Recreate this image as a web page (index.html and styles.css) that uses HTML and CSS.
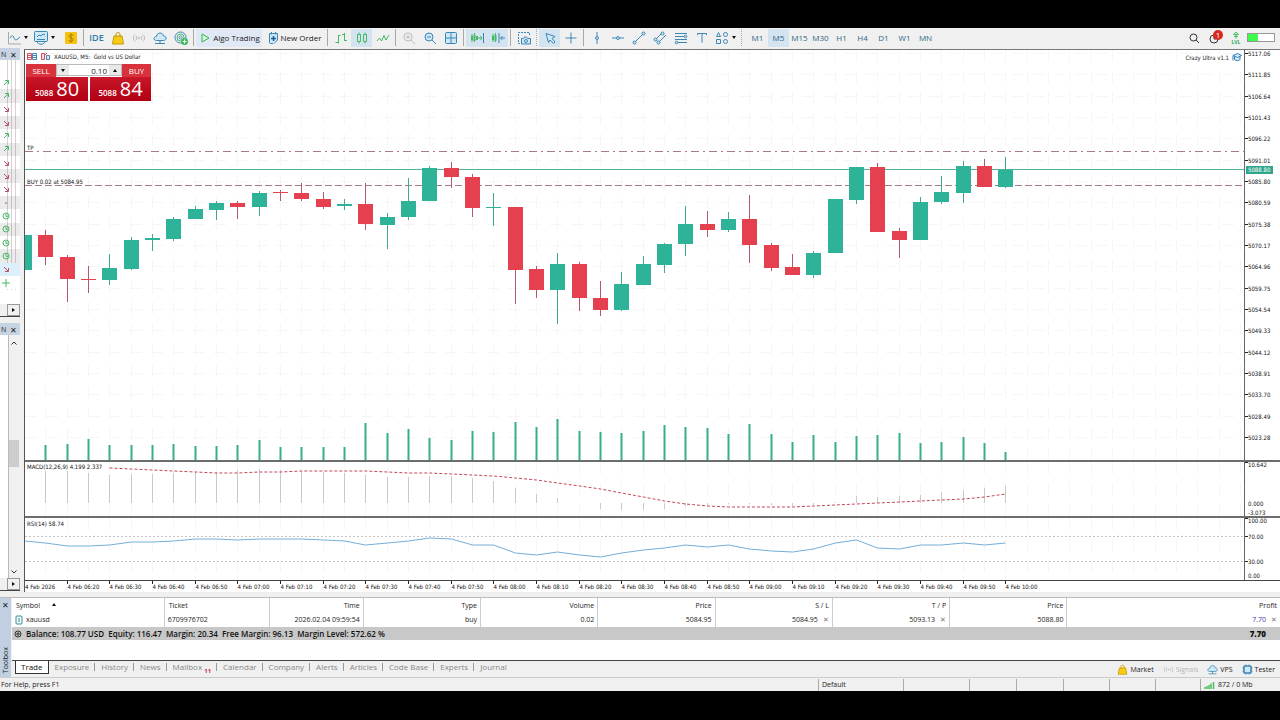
FILE: index.html
```html
<!DOCTYPE html>
<html lang="en">
<head>
  <meta charset="UTF-8">
  <meta name="viewport" content="width=device-width, initial-scale=1.0">
  <title>XAUUSD, M5</title>
  <link rel="stylesheet" href="styles.css">
</head>
<body>
  <div class="terminal">
    <header class="toolbar">
      <button class="tool menu" aria-label="Chart"><svg class="icon" viewBox="0 0 14 14"><path class="gray" d="M1.500 1v12H14"/><path class="blue" d="M3 7c2-3 3-3 4 0s3 2 6-1"/></svg><i class="caret"></i></button>
      <button class="tool menu" aria-label="Indicators"><svg class="icon" viewBox="0 0 14 14"><rect class="blue soft" x=".500" y=".500" width="13" height="10" rx="1"/><path class="blue" d="M3 6l2-2 2 1 2-2 2 1M3 8.500h8M3 11c2 3 6 3 8 0"/></svg><i class="caret"></i></button>
      <button class="tool last" aria-label="Funds"><svg class="icon" viewBox="0 0 14 14"><rect x="1" y="1" width="12" height="12" rx="1" fill="#f5c211"/><path d="M9.500 4.500C8 3 4.500 3.500 5 5.500s4 1 4.200 3S6 11 4.500 9.500M7 2.500v9" fill="none" stroke="#a87c00"/></svg></button>
      <i class="sep"></i>
      <button class="tool ide">IDE</button>
      <button class="tool" aria-label="Market"><svg class="icon" viewBox="0 0 14 14"><path d="M3 5h8l1.500 8h-11z" fill="#f8cb15" stroke="#c99a00"/><path d="M5 6V3.500a2 2 0 0 1 4 0V6" fill="none" stroke="#c99a00"/></svg></button>
      <button class="tool" aria-label="Signals"><svg class="icon" viewBox="0 0 14 14"><path class="pale" d="M3 3.500C1 5.500 1 8.500 3 10.500M11 3.500c2 2 2 5 0 7M5 5C4 6.500 4 7.500 5 9M9 5c1 1.500 1 2.500 0 4"/><circle cx="7" cy="7" r="1" fill="#bbb"/></svg></button>
      <button class="tool" aria-label="VPS"><svg class="icon" viewBox="0 0 14 14"><path class="blue soft" d="M3.500 9.500C0 9.500.500 5.500 3.500 5.500 4 1 10 1 10.500 5c3.500 0 3.500 4.500 0 4.500z"/><path class="blue" d="M7 9.500V12M2 12.500h10"/></svg></button>
      <button class="tool" aria-label="Community"><svg class="icon" viewBox="0 0 14 14"><circle class="blue" cx="6.500" cy="6.500" r="5.500"/><circle class="green" cx="6.500" cy="6.500" r="3.500"/><circle class="blue" cx="6.500" cy="6.500" r="1.500"/><circle cx="10.500" cy="10.500" r="3.500" fill="#3cb95c"/><path d="M8.500 10.500h4M10.500 8.500v4" stroke="#fff"/></svg></button>
      <i class="sep"></i>
      <button class="tool algo active"><svg class="icon" viewBox="0 0 14 14"><path d="M4 3l7 4-7 4z" fill="#d9f5df" stroke="#34b555"/></svg>Algo Trading</button>
      <button class="tool order"><svg class="icon" viewBox="0 0 14 14"><path class="blue soft" d="M7 12.500H4.500a1 1 0 0 1-1-1v-9h8v6.500L8 12.500"/><path class="blue" d="M5.500 1v2.500M9.500 1v2.500"/><path d="M5 7.500h5M7.500 5v5" stroke="#1b5e8c" stroke-width="1.500"/></svg>New Order</button>
      <i class="sep"></i>
      <button class="tool" aria-label="Bars"><svg class="icon" viewBox="0 0 14 14"><path class="green" d="M4.500 4v8.500M1.500 11.500h3M4.500 4.500h2M10.500 2v8M8 3.500h2.500M10.500 9.500H13"/></svg></button>
      <button class="tool active" aria-label="Candles"><svg class="icon" viewBox="0 0 14 14"><path class="green" d="M2.500 3.500h3v7h-3zM8.500 3.500h3v7h-3zM4 1.500v2M4 10.500v2M10 1.500v2M10 10.500v2"/></svg></button>
      <button class="tool" aria-label="Line"><svg class="icon" viewBox="0 0 14 14"><path class="green" d="M1 10l2.500-3 2 3L8 4.500l2 4.500 3-5"/></svg></button>
      <i class="sep"></i>
      <button class="tool" aria-label="Zoom in"><svg class="icon" viewBox="0 0 14 14"><circle class="pale" cx="6" cy="6" r="4"/><path class="pale" d="M9 9l4 4M4 6h4M6 4v4"/></svg></button>
      <button class="tool" aria-label="Zoom out"><svg class="icon" viewBox="0 0 14 14"><circle class="blue soft" cx="6" cy="6" r="4"/><path class="blue" d="M9 9l4 4M4 6h4"/></svg></button>
      <button class="tool" aria-label="Tile"><svg class="icon" viewBox="0 0 14 14"><rect class="blue soft" x="1.500" y="1.500" width="11" height="11" rx="1"/><path class="blue" d="M7 1.500v11M1.500 7h11"/></svg></button>
      <i class="sep"></i>
      <button class="tool active" aria-label="Auto scroll"><svg class="icon" viewBox="0 0 14 14"><path class="green bold" d="M2 5v4M4.500 4v6M7 5v4"/><path class="green" d="M2 3v8M4.500 2v9M8 7h4M10.500 5L12 7l-1.500 2"/><path class="blue" d="M13.500 2v10"/></svg></button>
      <button class="tool active" aria-label="Chart shift"><svg class="icon" viewBox="0 0 14 14"><path class="green bold" d="M2 5v4M4.500 4v6"/><path class="green" d="M2 3v8M4.500 2v9"/><path class="blue" d="M8 2v10M9.500 7H14M11.500 5l-2 2 2 2"/></svg></button>
      <i class="sep"></i>
      <button class="tool" aria-label="Screenshot"><svg class="icon" viewBox="0 0 14 14"><path class="blue" stroke-dasharray="2 1" d="M3 12.500H1.500v-11h11V5"/><path class="blue soft" d="M4.500 7.500h2l1-1.500h2l1 1.500h3v5.500h-9z"/><circle class="blue" cx="9" cy="10" r="1.500"/></svg></button>
      <i class="sep dots"></i>
      <button class="tool active" aria-label="Cursor"><svg class="icon" viewBox="0 0 14 14"><path class="blue soft" d="M3 2.500l9 3-3 2 3 3.500-1.500 1.500L7 9l-1.500 2.500z"/></svg></button>
      <button class="tool" aria-label="Crosshair"><svg class="icon" viewBox="0 0 14 14"><path class="blue" d="M7 1.500v11M1.500 7h11"/></svg></button>
      <i class="sep"></i>
      <button class="tool" aria-label="Vertical line"><svg class="icon" viewBox="0 0 14 14"><path class="blue" d="M7 1v4.500M7 8.500V13"/><circle class="blue soft" cx="7" cy="7" r="1.500"/></svg></button>
      <button class="tool" aria-label="Horizontal line"><svg class="icon" viewBox="0 0 14 14"><path class="blue" d="M1 7h4.500M8.500 7H13"/><circle class="blue soft" cx="7" cy="7" r="1.500"/></svg></button>
      <button class="tool" aria-label="Trend line"><svg class="icon" viewBox="0 0 14 14"><path class="blue" d="M3 11l8-8"/><circle class="blue soft" cx="2.500" cy="11.500" r="1.500"/><circle class="blue soft" cx="11.500" cy="2.500" r="1.500"/></svg></button>
      <button class="tool" aria-label="Channel"><svg class="icon" viewBox="0 0 14 14"><path class="blue" d="M3 8l6-6M6 11l7-7"/><circle class="blue soft" cx="2.500" cy="8.500" r="1.500"/><circle class="blue soft" cx="5.500" cy="11.500" r="1.500"/><circle class="blue soft" cx="9.500" cy="2.500" r="1.500"/></svg></button>
      <button class="tool" aria-label="Fibonacci"><svg class="icon" viewBox="0 0 14 14"><path class="blue" d="M1 2.500h12M1 5.500h9M1 8.500h12M3 11.500h10"/><circle class="blue soft" cx="11.500" cy="5.500" r="1.300"/><circle class="blue soft" cx="2.500" cy="11.500" r="1.300"/></svg></button>
      <button class="tool" aria-label="Text"><svg class="icon" viewBox="0 0 14 14"><path class="blue" d="M2.500 4V2.500h9V4M7 2.500v9"/></svg></button>
      <button class="tool menu" aria-label="Shapes"><svg class="icon" viewBox="0 0 14 14"><path class="blue" d="M1.500 5.500l2-4 2 4zM1.500 8.500h4v4h-4z"/><circle class="blue" cx="10.500" cy="3.500" r="2"/><circle class="blue" cx="10.500" cy="10.500" r="2"/></svg><i class="caret"></i></button>
      <i class="sep dots"></i>
      <nav class="periods">
        <button class="tool">M1</button>
        <button class="tool active">M5</button>
        <button class="tool">M15</button>
        <button class="tool">M30</button>
        <button class="tool">H1</button>
        <button class="tool">H4</button>
        <button class="tool">D1</button>
        <button class="tool">W1</button>
        <button class="tool">MN</button>
      </nav>
      <div class="status-icons">
        <button class="tool" aria-label="Search"><svg class="icon" viewBox="0 0 14 14"><circle class="dark" cx="6.500" cy="6.500" r="3.500"/><path class="dark" d="M9 9l3 3"/></svg></button>
        <button class="tool alert" aria-label="Notifications"><svg class="icon" viewBox="0 0 14 14"><circle class="dark" cx="6" cy="8" r="4"/><path class="dark" d="M6 5v3h2"/></svg><span class="badge">1</span></button>
        <span class="lvl"><svg viewBox="0 0 10 8"><path class="green" d="M5 1l2.500 2.500h-5zM5 3.500v4M3 5.500h4"/></svg>LVL</span>
        <span class="battery"><i></i></span>
      </div>
    </header>

    <main class="workspace">
      <aside class="docks">
        <section class="dock market">
          <div class="dock-head"><span>N</span><button aria-label="Close">✕</button></div>
          <ul class="quotes" id="quotes"></ul>
          <div class="dock-foot"><button aria-label="Scroll right"><i></i></button></div>
        </section>
        <section class="dock navigator">
          <div class="dock-head"><span>N</span><button aria-label="Close">✕</button></div>
          <div class="track">
            <svg viewBox="0 0 8 6"><path class="dark" d="M1.500 4.500L4 2l2.500 2.500"/></svg>
            <i class="thumb"></i>
            <svg viewBox="0 0 8 6"><path class="dark" d="M1.500 1.500L4 4l2.500-2.500"/></svg>
          </div>
          <div class="dock-foot"><button aria-label="Scroll right"><i></i></button></div>
        </section>
      </aside>

      <section class="chart">
        <div class="panel price">
          <svg class="plot" id="pricePlot"></svg>
          <svg class="axis" id="priceAxis"></svg>
          <div class="chart-title">
            <svg viewBox="0 0 24 9"><path fill="#fff" stroke="#d05060" d="M.500 1.500h4v6h-4z"/><path fill="#fff" stroke="#4a86b8" d="M5.500 1.500h4v6h-4z"/><path stroke="#d05060" d="M1 3.500h3M1 5.500h3"/><path stroke="#4a86b8" d="M6 3.500h3M6 5.500h3"/><path fill="#fbe3e5" stroke="#d05060" d="M14.500 7.500v-6h3v6z"/><path fill="#d6e9f7" stroke="#4a86b8" d="M19.500 7.500v-4h3v4z"/><path stroke="#d05060" d="M18 3l2-2"/></svg>
            <span>XAUUSD, M5:&nbsp; Gold vs US Dollar</span>
          </div>
          <div class="expert">Crazy Ultra v1.1
            <svg viewBox="0 0 10 10"><path fill="#d6ecfa" stroke="#2d7fb3" d="M1 3.500L5.500 1.500l4 2-4 2zM2.500 4.500v3c2 1.500 4 1.500 5.500 0v-3M1 3.500v5"/></svg>
          </div>
          <form class="one-click">
            <button type="button" class="side sell">SELL</button>
            <div class="volume">
              <button type="button" aria-label="Less"><i class="caret"></i></button>
              <input type="text" value="0.10" aria-label="Volume">
              <button type="button" aria-label="More"><i class="caret up"></i></button>
            </div>
            <button type="button" class="side buy">BUY</button>
            <button type="button" class="quote bid"><small>5088</small>80</button>
            <button type="button" class="quote ask"><small>5088</small>84</button>
          </form>
        </div>
        <div class="panel macd">
          <svg class="plot" id="macdPlot"></svg>
          <svg class="axis" id="macdAxis"></svg>
        </div>
        <div class="panel rsi">
          <svg class="plot" id="rsiPlot"></svg>
          <svg class="axis" id="rsiAxis"></svg>
        </div>
        <svg class="times" id="times"></svg>
      </section>
    </main>

    <section class="toolbox">
      <div class="toolbox-side"><button aria-label="Close">✕</button><span>Toolbox</span></div>
      <div class="toolbox-main">
        <table class="trades">
          <colgroup><col class="c-symbol"><col class="c-ticket"><col class="c-time"><col class="c-num"><col class="c-num"><col class="c-num"><col class="c-num"><col class="c-num"><col class="c-num"><col></colgroup>
          <thead>
            <tr><th>Symbol <i class="caret up"></i></th><th>Ticket</th><th>Time</th><th>Type</th><th>Volume</th><th>Price</th><th>S / L</th><th>T / P</th><th>Price</th><th>Profit</th></tr>
          </thead>
          <tbody>
            <tr>
              <td><svg class="doc" viewBox="0 0 8 10"><rect x="1" y="1" width="6" height="8" rx="1" fill="#eefafa" stroke="#3b8a96"/><path d="M3 4h2M3 6h2" stroke="#3b8a96"/></svg>xauusd</td>
              <td>6709976702</td><td>2026.02.04 09:59:54</td><td>buy</td><td>0.02</td><td>5084.95</td>
              <td>5084.95<button aria-label="Clear stop loss">✕</button></td><td>5093.13<button aria-label="Clear take profit">✕</button></td><td>5088.80</td>
              <td><span class="gain">7.70</span><button aria-label="Close position">✕</button></td>
            </tr>
          </tbody>
        </table>
        <div class="balance">
          <svg viewBox="0 0 8 8"><circle class="dark" cx="4" cy="4" r="3"/><path class="dark" d="M2 4h4M4 2v4"/></svg>
          <span>Balance: 108.77 USD&nbsp; Equity: 116.47&nbsp; Margin: 20.34&nbsp; Free Margin: 96.13&nbsp; Margin Level: 572.62 %</span>
          <b>7.70</b>
        </div>
        <div class="tabs">
          <nav>
            <a class="current" href="#">Trade</a><a href="#">Exposure</a><a href="#">History</a><a href="#">News</a><a href="#">Mailbox <sub>11</sub></a><a href="#">Calendar</a><a href="#">Company</a><a href="#">Alerts</a><a href="#">Articles</a><a href="#">Code Base</a><a href="#">Experts</a><a href="#">Journal</a>
          </nav>
          <div class="services">
            <button><svg viewBox="0 0 14 14"><path d="M3 5h8l1.500 8h-11z" fill="#f8cb15" stroke="#c99a00"/><path d="M5 6V3.500a2 2 0 0 1 4 0V6" fill="none" stroke="#c99a00"/></svg>Market</button>
            <button disabled><svg viewBox="0 0 14 14"><path class="pale" d="M3 3.500C1 5.500 1 8.500 3 10.500M11 3.500c2 2 2 5 0 7M5 5C4 6.500 4 7.500 5 9M9 5c1 1.500 1 2.500 0 4"/><circle cx="7" cy="7" r="1" fill="#bbb"/></svg>Signals</button>
            <button><svg viewBox="0 0 14 14"><path class="blue soft" d="M3.500 9.500C0 9.500.500 5.500 3.500 5.500 4 1 10 1 10.500 5c3.500 0 3.500 4.500 0 4.500z"/><path class="blue" d="M7 9.500V12M2 12.500h10"/></svg>VPS</button>
            <button><svg viewBox="0 0 14 14"><rect class="blue soft bold" x="2.500" y="2.500" width="9" height="9" rx="1"/><path class="blue" d="M5 .500v2M9 .500v2M5 11.500v2M9 11.500v2M.500 5h2M.500 9h2M11.500 5h2M11.500 9h2"/></svg>Tester</button>
          </div>
        </div>
      </div>
    </section>

    <footer class="statusbar">
      <span class="help">For Help, press F1</span>
      <span class="profile">Default</span>
      <span></span><span></span><span></span><span></span><span></span><span></span>
      <span class="traffic"><svg viewBox="0 0 11 8"><path stroke="#4fbf62" stroke-width="1.500" d="M1 8V6M3 8V5M5 8V4M7 8V2.500M9.500 8V1"/></svg>872 / 0 Mb</span>
    </footer>
  </div>

  <script>
    const STEP = 64 / 3; // distance between two bars
    const GRID = '#f6f6f6';

    // high, body top, body bottom, low, direction
    const candles = [
      [185, 185, 220, 220, 1], [180, 185, 207, 215, 0], [205, 207, 229, 252, 0], [216, 229, 230, 243, 0],
      [204, 218, 230, 235, 1], [187, 190, 219, 220, 1], [184, 188, 190, 201, 1], [167, 169, 189, 191, 1],
      [156, 159, 169, 169, 1], [151, 153, 160, 170, 1], [151, 153, 157, 169, 0], [141, 143, 157, 166, 1],
      [140, 142, 143, 151, 0], [133, 143, 149, 151, 0], [142, 149, 157, 159, 0], [149, 154, 156, 160, 1],
      [133, 154, 174, 180, 0], [163, 167, 175, 199, 1], [128, 151, 167, 170, 1], [116, 118, 151, 151, 1],
      [112, 118, 127, 138, 0], [124, 127, 158, 167, 0], [143, 157, 158, 176, 1], [157, 157, 220, 254, 0],
      [216, 219, 240, 248, 0], [203, 214, 240, 274, 1], [212, 214, 248, 261, 0], [231, 248, 260, 266, 0],
      [222, 234, 260, 261, 1], [206, 214, 235, 235, 1], [193, 194, 215, 223, 1], [156, 174, 194, 206, 1],
      [161, 174, 180, 187, 0], [162, 169, 180, 182, 1], [145, 169, 195, 213, 0], [193, 195, 218, 221, 0],
      [204, 217, 225, 225, 0], [201, 203, 225, 228, 1], [149, 149, 203, 203, 1], [117, 117, 150, 154, 1],
      [113, 117, 182, 182, 0], [178, 181, 190, 208, 0], [147, 152, 190, 190, 1], [126, 142, 152, 154, 1],
      [111, 116, 143, 153, 1], [109, 116, 137, 137, 0], [107, 120, 137, 138, 1]
    ];
    const volumes = [0, 15, 16, 21, 15, 15, 15, 16, 14, 14, 15, 20, 13, 13, 13, 13, 37, 27, 31, 22, 20, 29, 28, 38, 33, 41,
      29, 28, 27, 29, 35, 33, 32, 26, 36, 26, 18, 25, 18, 24, 25, 27, 17, 18, 23, 17, 8];
    const macd = [0, 32, 32, 30, 28, 29, 29, 30, 31, 31, 33, 34, 33, 32, 31, 30, 28, 26, 26, 27, 27, 25, 22, 15, 9, 5,
      0, -6, -7, -7, -6, -3, -2, -1, -1, -2, -3, -2, 1, 7, 6, 7, 8, 11, 13, 15, 17];
    const signal = [6, 7, 8, 9, 10, 11, 11, 10, 10, 9, 9, 9, 9, 10, 11, 11, 12, 13, 14, 16, 18, 21, 24, 27, 31, 35,
      39, 42, 44, 45, 45, 45, 45, 44, 43, 42, 41, 40, 39, 38, 37, 35, 32];
    const rsi = [23, 25, 28, 28, 27, 24, 24, 23, 21, 21, 22, 21, 21, 21, 22, 23, 27, 25, 23, 20, 21, 27, 27, 35, 37, 34,
      37, 39, 35, 32, 30, 27, 29, 27, 31, 33, 34, 31, 25, 22, 30, 31, 27, 27, 25, 27, 25];

    const x = i => Math.round(i * STEP) - 0.5;

    function line(x1, y1, x2, y2, color, extra = '') {
      return `<line x1="${x1}" y1="${y1}" x2="${x2}" y2="${y2}" stroke="${color}" ${extra}/>`;
    }

    function label(tx, y, value, cls = '') {
      return `<text x="${tx}" y="${y}" class="${cls}">${value}</text>`;
    }

    function grid(width, height) {
      let out = '';
      for (let i = 1; x(i) < width; i++) out += line(x(i), 0, x(i), height, GRID, 'stroke-dasharray="12 9"');
      return out;
    }

    function drawPrice() {
      const svg = document.getElementById('pricePlot');
      const w = svg.clientWidth, h = svg.clientHeight;
      let out = grid(w, h), axis = '';
      for (let i = 0; i < 19; i++) {
        const y = Math.round(3 + i * STEP) + 0.5;
        out += line(0, y, '100%', y, GRID, 'stroke-dasharray="12 9"');
        axis += line(0, y, 3, y, '#222') + label(3, y + 2.5, (5117.06 - i * 5.21).toFixed(2));
      }
      volumes.forEach((v, i) => { out += line(x(i), h - v, x(i), h, '#35ae88', 'stroke-width="2"'); });
      out += line(0, 101.5, '100%', 101.5, '#a97c84', 'stroke-dasharray="8 4 2 4"');
      out += line(0, 135.5, '100%', 135.5, '#a97c84', 'stroke-dasharray="7 3"');
      out += line(0, 119.5, '100%', 119.5, '#52b495');
      candles.forEach(([high, top, bottom, low, up], i) => {
        out += line(x(i), high, x(i), low, up ? '#3fa98b' : '#b5566a');
        out += `<rect x="${x(i) - 7.5}" y="${top}" width="15" height="${bottom - top}" fill="${up ? '#2fb398' : '#e5404f'}"/>`;
      });
      out += label(2, 100, 'TP') + label(2, 134, 'BUY 0.02 at 5084.95');
      axis += '<rect x="1" y="116" width="27" height="8" fill="#2fa58b"/>' + label(3, 122, '5088.80', 'light');
      svg.innerHTML = out;
      document.getElementById('priceAxis').innerHTML = axis;
    }

    function drawMacd() {
      const svg = document.getElementById('macdPlot');
      let out = grid(svg.clientWidth, svg.clientHeight);
      macd.forEach((v, i) => { if (v) out += line(x(i), 41 - v, x(i), 41, '#c9c9c9'); });
      out += `<polyline points="${signal.map((y, i) => x(i + 4) + ',' + y).join(' ')}" fill="none" stroke="#c4465a" stroke-dasharray="3 2"/>`;
      out += label(2, 7, 'MACD(12,26,9) 4.199 2.337');
      svg.innerHTML = out;
      document.getElementById('macdAxis').innerHTML = line(0, 0.5, 3, 0.5, '#222') + label(3, 5, '10.642') + label(3, 44, '0.000') + label(3, 53, '-3.073');
    }

    function drawRsi() {
      const svg = document.getElementById('rsiPlot');
      let out = grid(svg.clientWidth, svg.clientHeight);
      out += line(0, 18.5, '100%', 18.5, '#c4c4c4', 'stroke-dasharray="2 2"');
      out += line(0, 43.5, '100%', 43.5, '#c4c4c4', 'stroke-dasharray="2 2"');
      out += `<polyline points="${rsi.map((y, i) => x(i) + ',' + y).join(' ')}" fill="none" stroke="#74aed8"/>`;
      out += label(2, 8, 'RSI(14) 58.74');
      svg.innerHTML = out;
      document.getElementById('rsiAxis').innerHTML = line(0, 0.5, 3, 0.5, '#222') + label(3, 5, '100.00') +
        line(0, 18.5, 3, 18.5, '#222') + label(3, 21, '70.00') + line(0, 43.5, 3, 43.5, '#222') + label(3, 46, '30.00') + label(3, 60, '0.00');
    }

    // a label under every second bar, the first one carries the date
    function drawTimes() {
      let out = label(0, 8, '4 Feb 2026');
      for (let k = 1; k <= 23; k++) {
        const minutes = 370 + k * 10;
        const clock = String(Math.floor(minutes / 60)).padStart(2, '0') + ':' + String(minutes % 60).padStart(2, '0');
        out += line(x(k * 2), 0, x(k * 2), 3, '#222') + label(x(k * 2), 8, '4 Feb ' + clock);
      }
      document.getElementById('times').innerHTML = out;
    }

    const marks = {
      up: '<path class="green" d="M2 6l4-4M3 1.500h3.500V5"/>',
      down: '<path class="rose" d="M2 2l4 4M6.500 3v3.500H3"/>',
      dot: '<circle cx="4" cy="4" r="1" fill="#999"/>',
      clock: '<circle class="green" cx="4" cy="4" r="3"/><path class="green" d="M4 2v2.500h1.500"/>',
      plus: '<path class="green" d="M4 0v8M0 4h8"/>'
    };
    const rows = ['up', 'up', 'down', 'down', 'up', 'up', 'down', 'down', 'down', 'dot', 'clock', 'clock', 'clock', 'clock', 'down', 'plus'];
    document.getElementById('quotes').innerHTML = rows.map(r => `<li><svg viewBox="0 0 8 8">${marks[r]}</svg></li>`).join('');

    function draw() {
      drawPrice();
      drawMacd();
      drawRsi();
      drawTimes();
    }
    window.addEventListener('resize', draw);
    draw();
  </script>
</body>
</html>
```
FILE: styles.css
```css
* {
  box-sizing: border-box;
}
body {
  margin: 0;
  background: #000;
  font-family: "Open Sans", "Noto Sans", sans-serif;
  font-size: 8px;
  color: #222;
}
button {
  padding: 0;
  border: none;
  background: none;
  font: inherit;
  color: inherit;
}
svg {
  display: block;
  flex: none;
}
.terminal {
  display: flex;
  flex-direction: column;
  height: 100vh;
  padding: 28px 0 29px;
}
.terminal > * {
  background: #f0f0f0;
}

/* icon strokes */
.blue, .green, .gray, .pale, .dark, .rose {
  fill: none;
  stroke: #3c86b4;
}
.soft {
  fill: #cfe8f8;
}
.green {
  stroke: #45b964;
}
.gray {
  stroke: #aaa;
}
.pale {
  stroke: #bbb;
}
.dark {
  stroke: #333;
}
.rose {
  stroke: #b8506a;
}
.bold {
  stroke-width: 2;
}
.caret {
  display: inline-block;
  border: 2px solid transparent;
  border-top: 3px solid #111;
  border-bottom: 0;
}
.caret.up {
  border-top: 0;
  border-bottom: 3px solid #111;
}

/* toolbar */
.toolbar {
  display: flex;
  align-items: center;
  height: 20px;
  padding: 0 0 1px 4px;
}
.tool {
  display: flex;
  flex: none;
  align-items: center;
  justify-content: center;
  gap: 3px;
  width: 21px;
  height: 18px;
  color: #222;
}
.tool.active {
  background: #d3e3ef;
}
.icon {
  width: 14px;
  height: 14px;
}
.menu {
  width: 27px;
}
.last {
  margin-left: 2px;
}
.tool.ide {
  font-size: 9px;
  font-weight: 600;
  color: #2b7aa8;
}
.algo {
  width: 66px;
}
.tool.algo.active {
  background: #dfe8f4;
}
.order {
  width: 63px;
}
.algo, .order {
  gap: 1px;
  white-space: nowrap;
}
.sep {
  flex: none;
  width: 1px;
  height: 17px;
  margin: 0 2px;
  background: #a8a8a8;
}
.sep.dots {
  background: none;
  border-left: 1px dotted #aaa;
}
.periods {
  display: flex;
  padding-left: 3px;
}
.periods .tool {
  color: #2f6685;
}
.status-icons {
  display: flex;
  align-items: center;
  margin-left: auto;
  padding-right: 5px;
}
.alert {
  position: relative;
}
.badge {
  position: absolute;
  top: 1px;
  right: 2px;
  width: 10px;
  height: 10px;
  border-radius: 50%;
  background: #d9291c;
  color: #fff;
  line-height: 10px;
  text-align: center;
}
.lvl {
  width: 22px;
  font-size: 5px;
  font-weight: 700;
  line-height: 6px;
  text-align: center;
  color: #2fae4e;
}
.lvl svg {
  width: 10px;
  height: 8px;
  margin: 0 auto;
}
.battery {
  width: 28px;
  height: 9px;
  border: 1px solid #999;
  background: #fff;
}
.battery i {
  display: block;
  width: 10px;
  height: 7px;
  background: #3dfa4c;
}

/* docked windows */
.workspace {
  display: flex;
  flex: 1;
  min-height: 0;
  padding-bottom: 4px;
}
.docks {
  display: flex;
  flex-direction: column;
  width: 20px;
  margin-right: 4px;
}
.dock {
  display: flex;
  flex-direction: column;
}
.dock-head {
  display: flex;
  align-items: center;
  justify-content: space-between;
  height: 12px;
  padding: 0 3px 0 1px;
  background: #c6d3e2;
}
.dock-head span {
  font-size: 7px;
}
.market {
  height: 275px;
}
.quotes {
  flex: 1;
  margin: 0;
  padding: 16px 0 0;
  list-style: none;
  background: linear-gradient(90deg, transparent 7px, #dcd0d2 7px, #dcd0d2 8px, transparent 8px, transparent 11px, #d4d4d4 11px, #d4d4d4 12px, transparent 12px, transparent 15px, #dcd0d2 15px, #dcd0d2 16px, transparent 16px) top / 100% 230px no-repeat #fff;
}
.quotes li {
  display: flex;
  align-items: center;
  height: calc(40px / 3);
  padding-left: 2px;
}
.quotes li:nth-child(even) {
  background: rgba(0, 0, 0, 0.08);
}
.quotes li:nth-child(15) {
  background: #dcf0fb;
}
.quotes li:last-child {
  background: #fff;
}
.quotes svg {
  width: 8px;
  height: 8px;
}
.dock-foot {
  display: flex;
  justify-content: flex-end;
  height: 13px;
  border-bottom: 1px solid #444;
}
.market .dock-foot {
  margin-bottom: 6px;
}
.dock-foot button {
  display: grid;
  place-items: center;
  width: 13px;
  border: 1px solid #999;
}
.dock-foot i {
  border: 2px solid transparent;
  border-left: 3px solid #111;
  border-right: 0;
}
.navigator {
  flex: 1;
}
.track {
  display: flex;
  flex: 1;
  flex-direction: column;
  align-items: center;
  width: 11px;
  margin-left: 8px;
  padding: 5px 0 3px;
  border-left: 1px solid #bbb;
  box-shadow: -8px 0 #fff;
}
.track svg {
  width: 8px;
  height: 6px;
}
.thumb {
  width: 10px;
  height: 27px;
  margin: 94px 0 auto;
  background: #cdcdcd;
}
.navigator .dock-foot {
  margin-bottom: 2px;
}

/* chart */
.chart {
  display: flex;
  flex: 1;
  flex-direction: column;
  min-width: 0;
  margin: 1px 0;
  border-top: 1px solid #777;
  border-left: 1px solid #555;
  background: #fff;
  font-family: "DejaVu Sans Condensed", "DejaVu Sans", sans-serif;
}
.chart text {
  font-size: 6px;
  fill: #111;
}
.chart text.light {
  fill: #fff;
}
.panel {
  display: flex;
  position: relative;
  border-bottom: 2px solid #6c6c6c;
}
.price {
  flex: 1;
  min-height: 0;
}
.plot {
  flex: 1;
  min-width: 0;
  height: 100%;
  border-right: 1px solid #666;
}
.axis {
  width: 35px;
  height: 100%;
}
.macd {
  height: 56px;
}
.rsi {
  height: 63px;
  border-bottom: 1px solid #444;
}
.times {
  width: 100%;
  height: 11px;
}
.chart-title, .expert {
  position: absolute;
  top: 2px;
  display: flex;
  align-items: center;
  gap: 3px;
  font-size: 6px;
}
.chart-title {
  left: 2px;
}
.chart-title svg {
  width: 24px;
  height: 9px;
}
.expert {
  right: 38px;
}
.expert svg {
  width: 10px;
  height: 10px;
}
.one-click {
  position: absolute;
  top: 14px;
  left: 1px;
  display: grid;
  grid-template-columns: 30px 32px 2px 32px 29px;
  grid-template-rows: 13px 24px;
  width: 125px;
  font-family: "Open Sans", "Noto Sans", sans-serif;
  color: #fff;
}
.side {
  background: #d8323c;
}
.buy {
  grid-column: 5;
}
.volume {
  display: flex;
  grid-column: 2 / 5;
  height: 12px;
  border: 1px solid #bbb;
  background: #fff;
}
.volume button {
  display: grid;
  place-items: center;
  width: 12px;
  background: #e9e9e9;
}
.volume input {
  flex: 1;
  min-width: 0;
  padding: 0 2px;
  border: none;
  font: inherit;
  text-align: right;
  color: #222;
}
.quote {
  display: flex;
  align-items: baseline;
  justify-content: center;
  gap: 3px;
  background: linear-gradient(#c9162a, #b00012);
  font-size: 20px;
  line-height: 24px;
}
.quote small {
  font-size: 8px;
  font-weight: 600;
}
.bid {
  grid-column: 1 / 3;
}
.ask {
  grid-column: 4 / 6;
}

/* toolbox */
.toolbox {
  display: flex;
  height: 80px;
  border-top: 1px solid #bbb;
}
.toolbox-side {
  display: flex;
  flex-direction: column;
  align-items: center;
  justify-content: space-between;
  width: 11px;
  margin-right: 1px;
  padding: 1px 0 4px;
  background: #c0d0e0;
}
.toolbox-side span {
  writing-mode: vertical-rl;
  transform: rotate(180deg);
  font-size: 7px;
  line-height: 10px;
}
.toolbox-main {
  display: flex;
  flex: 1;
  flex-direction: column;
  min-width: 0;
  background: #fff;
}
.trades {
  width: 100%;
  table-layout: fixed;
  border-collapse: collapse;
  font-size: 7px;
}
.c-symbol {
  width: 12%;
}
.c-ticket {
  width: 8.3%;
}
.c-time {
  width: 7.4%;
}
.c-num {
  width: 9.25%;
}
.trades th, .trades td {
  height: 14px;
  padding: 0 3px;
  border-right: 1px solid #ccc;
  font-weight: 400;
  line-height: 12px;
  text-align: right;
  white-space: nowrap;
}
.trades th {
  height: 15px;
}
.trades th:nth-child(-n+2), .trades td:nth-child(-n+2) {
  text-align: left;
}
.trades th:first-child, .trades th:nth-child(2) {
  padding-left: 4px;
}
.trades th:last-child, .trades td:last-child {
  border-right: 0;
}
.trades th .caret {
  margin: 0 0 2px 10px;
}
.trades td button {
  margin-left: 5px;
  color: #777;
}
.doc {
  display: inline-block;
  width: 8px;
  height: 10px;
  margin-right: 3px;
  vertical-align: middle;
}
.gain {
  color: #3f35b5;
}
.balance {
  display: flex;
  align-items: center;
  gap: 4px;
  height: 13px;
  padding: 0 14px 0 2px;
  background: #c8c8c8;
  font-weight: 600;
  color: #111;
}
.balance svg {
  width: 8px;
  height: 8px;
}
.balance b {
  margin-left: auto;
}
.tabs {
  display: flex;
  justify-content: space-between;
  height: 17px;
  margin-top: auto;
  border-top: 1px solid #444;
  background: #f0f0f0;
}
.tabs nav {
  display: flex;
  align-items: flex-start;
  padding-left: 3px;
}
.tabs a {
  padding: 0 6px;
  line-height: 12px;
  color: #888;
  text-decoration: none;
  white-space: nowrap;
  background: linear-gradient(#999, #999) right center / 1px 8px no-repeat;
}
.tabs a:last-child {
  background: none;
}
.tabs a.current {
  padding: 0 5px;
  border: 1px solid #333;
  border-top: 0;
  background: #fff;
  color: #111;
}
.tabs sub {
  font-size: 6px;
  font-weight: 700;
  line-height: 6px;
  color: #c8324b;
}
.services {
  display: flex;
  align-items: center;
  gap: 9px;
  padding-right: 5px;
  font-size: 7px;
}
.services button {
  display: flex;
  align-items: center;
  gap: 2px;
}
.services button:disabled {
  color: #b5b5b5;
}
.services svg {
  width: 11px;
  height: 11px;
}

/* status bar */
.statusbar {
  display: grid;
  grid-template-columns: 818fr 85fr 66fr 47fr 47fr 46fr 46fr 45fr 80fr;
  align-items: center;
  height: 14px;
  border-top: 1px solid #ccc;
  font-size: 7px;
}
.statusbar span {
  display: flex;
  align-items: center;
  gap: 3px;
  height: 12px;
  padding-left: 3px;
  border-left: 1px solid #aaa;
}
.statusbar .help {
  padding-left: 1px;
  border: 0;
}
.statusbar svg {
  width: 11px;
  height: 8px;
}
```
